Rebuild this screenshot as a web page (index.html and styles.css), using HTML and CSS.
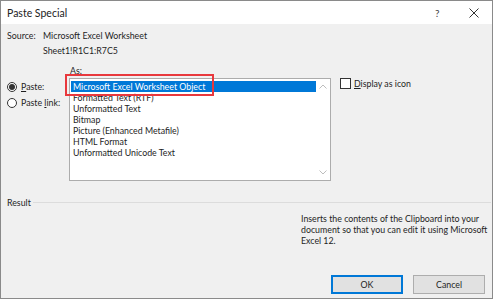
FILE: index.html
```html
<!DOCTYPE html>
<html>
<head>
<meta charset="utf-8">
<link rel="stylesheet" href="styles.css">
</head>
<body>
<div class="dialog">
  <div class="titlebar">
    <span class="title">Paste Special</span>
    <span class="tb-btns"><span class="help">?</span><span class="close">
      <svg width="10" height="10" viewBox="0 0 10 10"><path d="M0.5 0.5L9.5 9.5M9.5 0.5L0.5 9.5" stroke="#333" stroke-width="1" fill="none"/></svg>
    </span></span>
  </div>
  <div class="content">
    <div class="source">
      <span class="src-label">Source:</span>
      <div class="src-val"><div>Microsoft Excel Worksheet</div><div>Sheet1!R1C1:R7C5</div></div>
    </div>
    <div class="middle">
      <div class="radios">
        <label class="radio"><span class="rb checked"></span><span><u>P</u>aste:</span></label>
        <label class="radio"><span class="rb"></span><span>Paste <u>l</u>ink:</span></label>
      </div>
      <div class="as-col">
        <div class="as-label">As:</div>
        <div class="listbox">
          <ul class="items">
            <li class="sel">Microsoft Excel Worksheet Object</li>
            <li>Formatted Text (RTF)</li>
            <li>Unformatted Text</li>
            <li>Bitmap</li>
            <li>Picture (Enhanced Metafile)</li>
            <li>HTML Format</li>
            <li>Unformatted Unicode Text</li>
          </ul>
          <div class="scrollbar">
            <svg width="8" height="5" viewBox="0 0 8 5"><path d="M0.5 4.5L4 1L7.5 4.5" stroke="#bdbdbd" fill="none"/></svg>
            <svg width="8" height="5" viewBox="0 0 8 5"><path d="M0.5 0.5L4 4L7.5 0.5" stroke="#bdbdbd" fill="none"/></svg>
          </div>
          <div class="highlight"></div>
        </div>
      </div>
      <label class="check"><span class="cb"></span><span><u>D</u>isplay as icon</span></label>
    </div>
    <div class="result">
      <span class="res-label">Result</span><span class="res-line"></span>
    </div>
    <p class="desc">Inserts the contents of the Clipboard into your document so that you can edit it using Microsoft Excel 12.</p>
    <div class="buttons">
      <button class="btn default">OK</button>
      <button class="btn">Cancel</button>
    </div>
  </div>
</div>
</body>
</html>
```
FILE: styles.css
```css
html, body { margin: 0; padding: 0; }
body {
  width: 493px; height: 300px; overflow: hidden;
  font-family: Lato, "Open Sans", sans-serif;
  font-size: 8.8px; color: #1e1e1e;
}
.dialog {
  box-sizing: border-box; width: 493px; height: 299px;
  border: 1px solid #8a8a8a; background: #f0f0f0;
  display: flex; flex-direction: column;
}
.titlebar {
  height: 23px; background: #fff; display: flex; align-items: center;
  justify-content: space-between; padding: 0 0 0 6px;
}
.title { font-size: 10.5px; color: #222; }
.tb-btns { display: flex; align-items: center; }
.help { font-size: 10px; color: #444; width: 12px; margin-right: 22px; }
.close { display: flex; width: 10px; margin-right: 13px; }
.content { flex: 1; padding: 4px 0 0 6px; display: flex; flex-direction: column; position: relative; }
.source { display: flex; line-height: 15px; }
.src-label { width: 36px; }
.middle { display: flex; margin-top: 8px; }
.radios { width: 62px; padding-top: 15px; display: flex; flex-direction: column; gap: 4px; }
.radio { display: flex; align-items: center; gap: 4px; line-height: 12px; }
.rb { box-sizing: border-box; width: 10px; height: 10px; border: 1px solid #333; border-radius: 50%; background: #fff; display: flex; align-items: center; justify-content: center; }
.rb.checked::after { content: ""; width: 6px; height: 6px; border-radius: 50%; background: #333; }
.as-col { width: 262px; }
.as-label { line-height: 10px; padding-left: 1px; margin-bottom: 2px; }
.listbox { position: relative; box-sizing: border-box; height: 103px; border: 1px solid #acacac; background: #fff; display: flex; }
.items { list-style: none; margin: 0; padding: 2px 0 0 1px; flex: 1; }
.items li { height: 11px; line-height: 11px; padding-left: 2px; white-space: nowrap; }
.items li.sel { background: #0078d7; color: #fff; }
.scrollbar { width: 14px; display: flex; flex-direction: column; justify-content: space-between; align-items: center; padding: 5px 0 5px; background: #fff; }
.highlight { position: absolute; left: -5px; top: -5px; width: 145px; height: 18px; border: 2px solid #e8383d; }
.check { display: flex; align-items: flex-start; gap: 3px; margin-left: 9px; margin-top: 12px; line-height: 11px; }
.cb { box-sizing: border-box; width: 11px; height: 11px; border: 1px solid #333; background: #fff; }
.result { display: flex; align-items: center; margin-top: 16px; height: 10px; }
.res-label { font-size: 8.8px; }
.res-line { flex: 1; height: 1px; background: #dcdcdc; margin-left: 2px; margin-right: 1px; }
.desc { margin: 6px 0 0 294px; width: 192px; line-height: 11px; }
.buttons { display: flex; gap: 10px; margin: auto 0 4px 324px; }
.btn { box-sizing: border-box; width: 72px; height: 19px; font-family: inherit; font-size: 8.8px; color: #1e1e1e; background: #e1e1e1; border: 1px solid #adadad; padding: 0; }
.btn.default { border: 2px solid #0078d7; }
```
